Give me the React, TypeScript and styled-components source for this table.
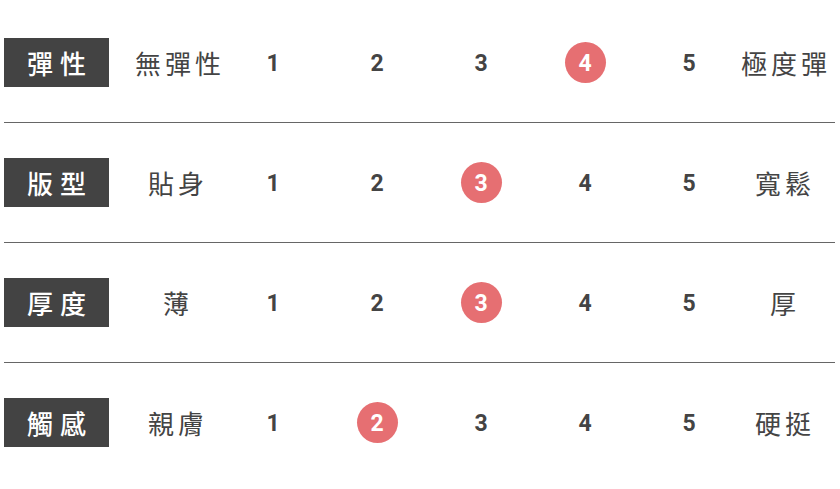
import styled, { createGlobalStyle } from 'styled-components';

const GlobalStyle = createGlobalStyle`
    body {
        margin: 0;
        background: #ffffff;
        font-family: "Noto Sans CJK TC", "Noto Sans", sans-serif;
    }
`

const Table = styled.div`
    width: 840px;
    padding: 3px 5px 0 4px;
    box-sizing: border-box;
`

const Row = styled.div<{ $last?: boolean }>`
    display: grid;
    grid-template-columns: 105px 112px repeat(5, 104px) 88px;
    align-items: center;
    padding: 35px 0;
    border-bottom: ${p => (p.$last ? 'none' : '1px solid #666666')};
`

const Label = styled.div`
    height: 49px;
    background: #434343;
    color: #ffffff;
    font-size: 26px;
    font-weight: 500;
    letter-spacing: 7px;
    display: flex;
    align-items: center;
    justify-content: center;
    padding-left: 7px;
    box-sizing: border-box;
`

const Term = styled.div<{ $end?: boolean }>`
    padding-left: ${p => (p.$end ? '0' : '26px')};
    text-align: center;
    color: #444444;
    font-size: 26px;
    letter-spacing: 4px;
    white-space: nowrap;
`

const Score = styled.div`
    display: flex;
    justify-content: center;
`

const Num = styled.span<{ $active?: boolean }>`
    width: 41px;
    height: 41px;
    padding-top: 2px;
    box-sizing: border-box;
    border-radius: 50%;
    display: flex;
    align-items: center;
    justify-content: center;
    font-family: Roboto, "Liberation Sans", sans-serif;
    font-size: 23px;
    font-weight: 700;
    color: ${p => (p.$active ? '#ffffff' : '#444444')};
    background: ${p => (p.$active ? '#e66f72' : 'transparent')};
`

const rows = [
    { label: '彈性', low: '無彈性', high: '極度彈', value: 4 },
    { label: '版型', low: '貼身', high: '寬鬆', value: 3 },
    { label: '厚度', low: '薄', high: '厚', value: 3 },
    { label: '觸感', low: '親膚', high: '硬挺', value: 2 },
]

export default function App() {
    return (
        <>
            <GlobalStyle />
            <Table>
                {rows.map((r, i) => (
                    <Row key={r.label} $last={i === rows.length - 1}>
                        <Label>{r.label}</Label>
                        <Term>{r.low}</Term>
                        {[1, 2, 3, 4, 5].map(n => (
                            <Score key={n}>
                                <Num $active={n === r.value}>{n}</Num>
                            </Score>
                        ))}
                        <Term $end>{r.high}</Term>
                    </Row>
                ))}
            </Table>
        </>
    )
}
